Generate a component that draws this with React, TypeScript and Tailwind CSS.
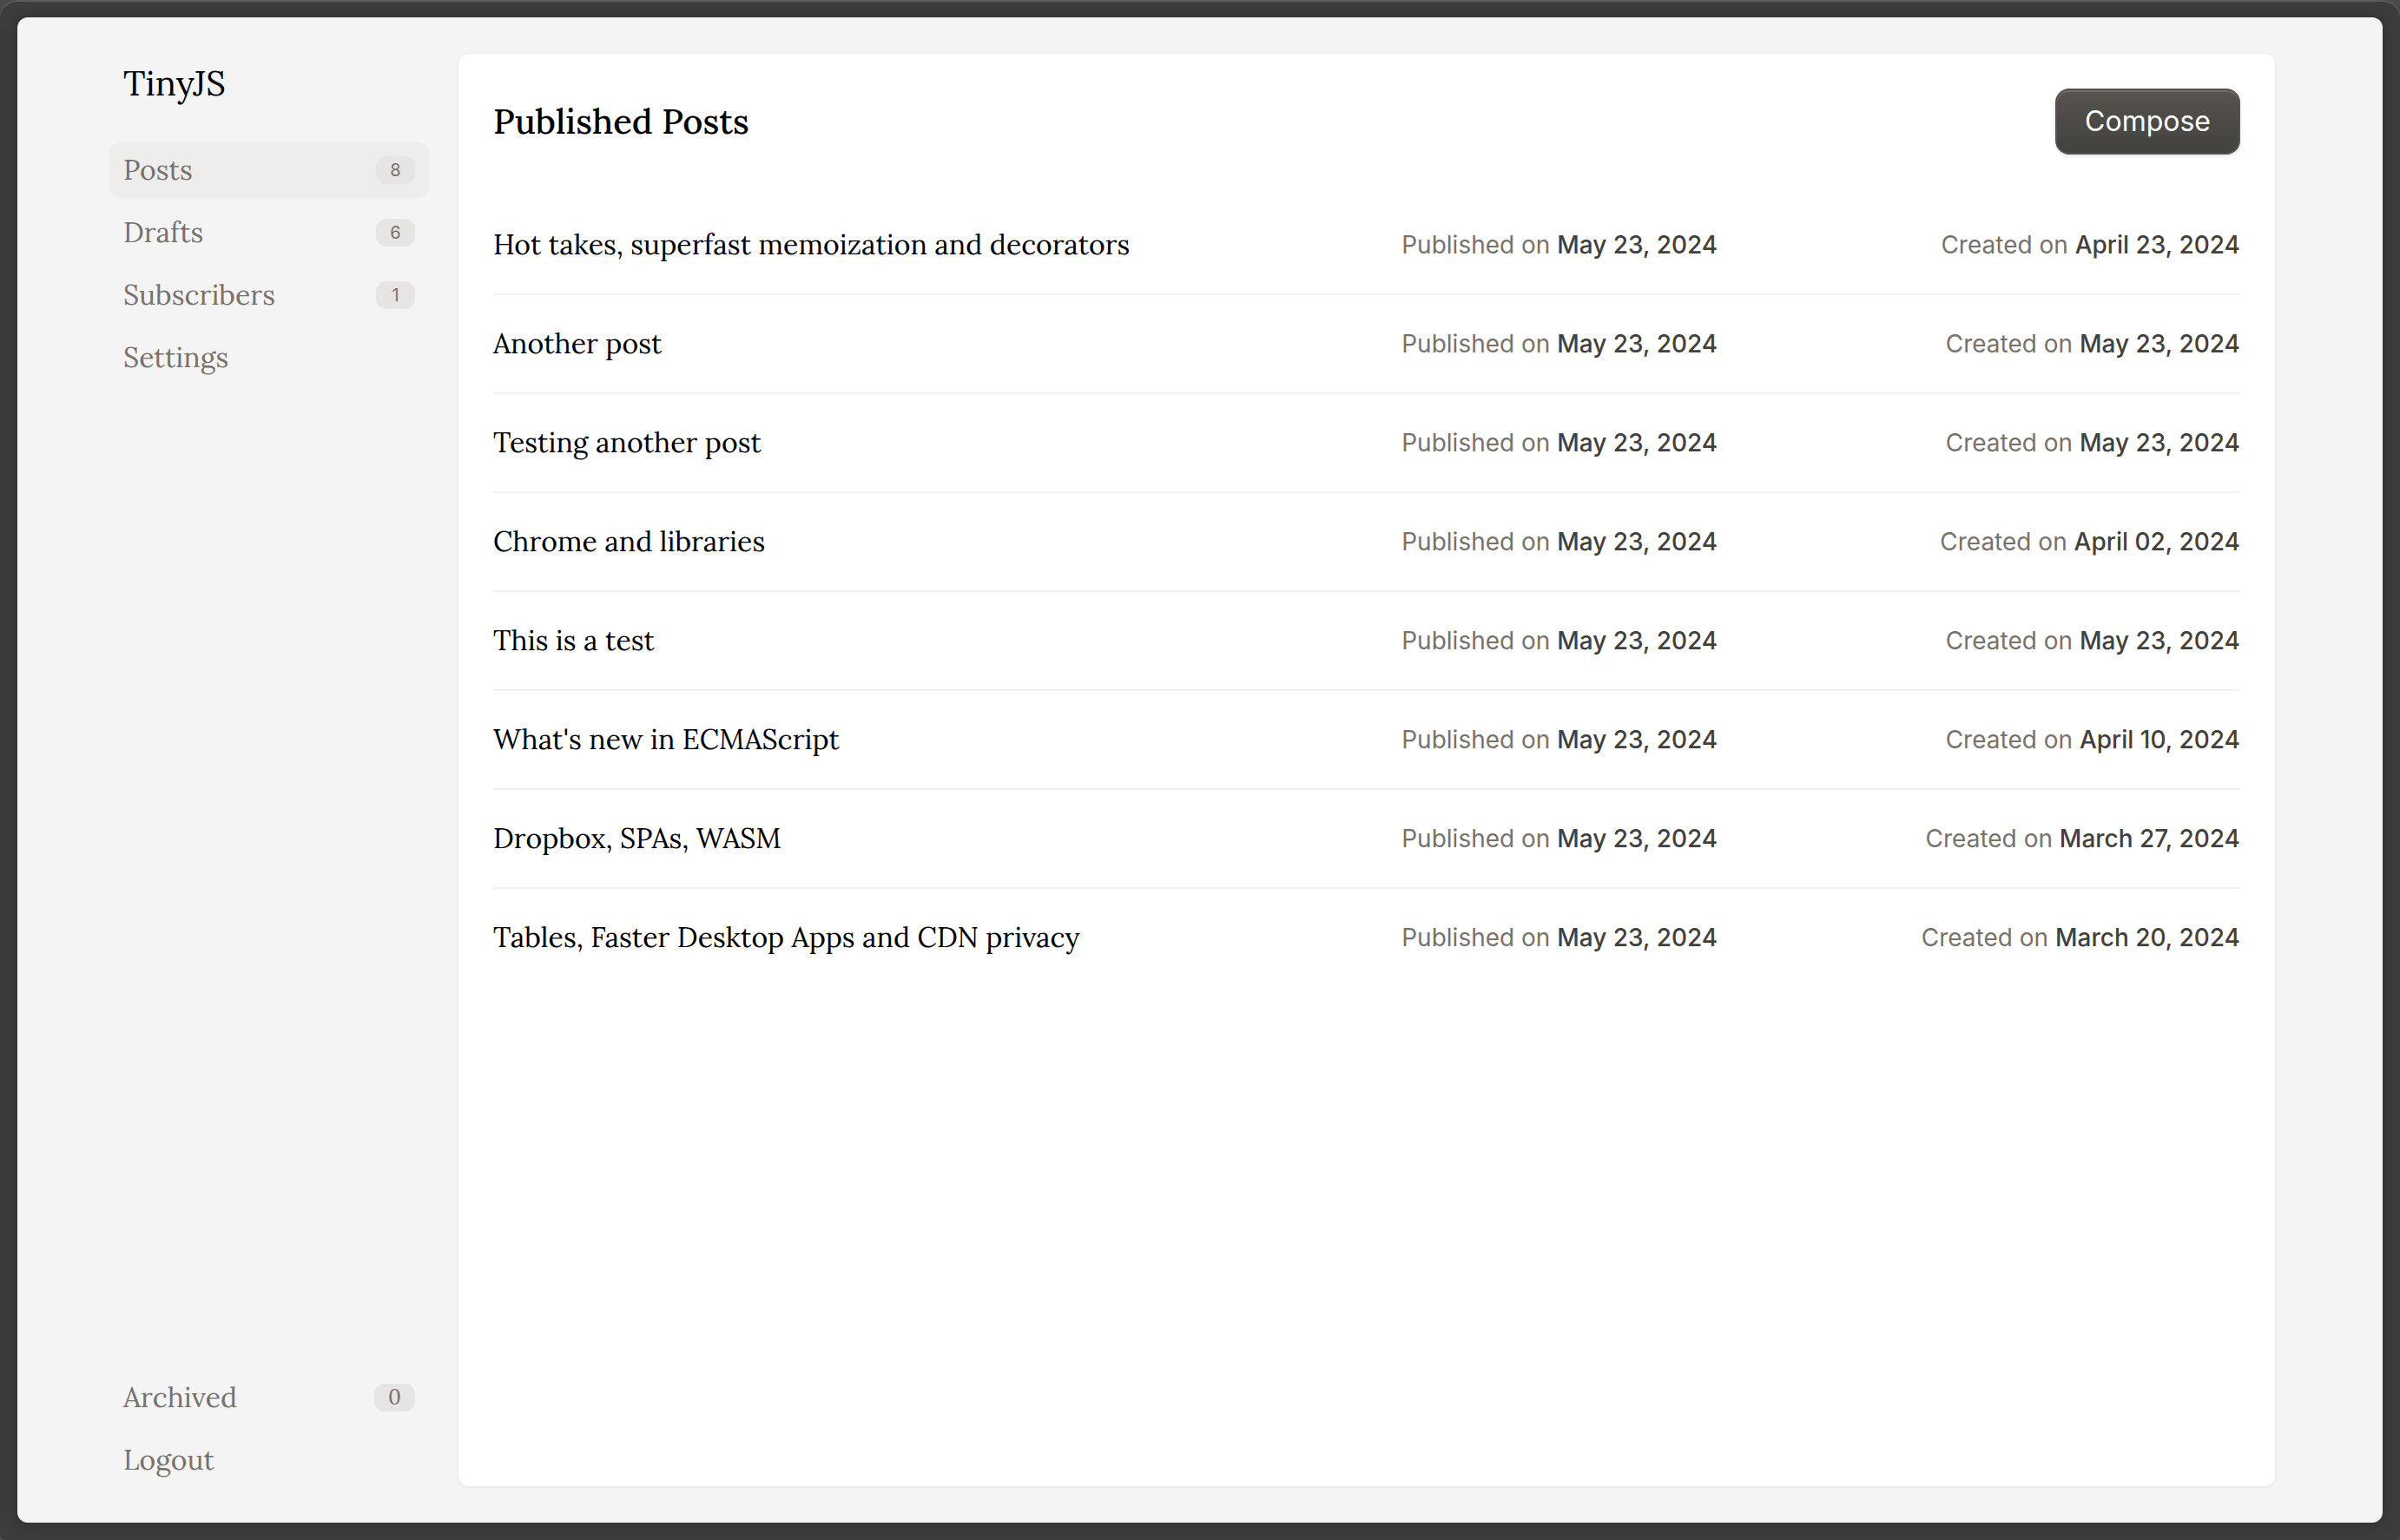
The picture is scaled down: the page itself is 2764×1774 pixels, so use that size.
import type { ReactNode } from "react";

const posts = [
  { title: "Hot takes, superfast memoization and decorators", published: "May 23, 2024", created: "April 23, 2024" },
  { title: "Another post", published: "May 23, 2024", created: "May 23, 2024" },
  { title: "Testing another post", published: "May 23, 2024", created: "May 23, 2024" },
  { title: "Chrome and libraries", published: "May 23, 2024", created: "April 02, 2024" },
  { title: "This is a test", published: "May 23, 2024", created: "May 23, 2024" },
  { title: "What's new in ECMAScript", published: "May 23, 2024", created: "April 10, 2024" },
  { title: "Dropbox, SPAs, WASM", published: "May 23, 2024", created: "March 27, 2024" },
  { title: "Tables, Faster Desktop Apps and CDN privacy", published: "May 23, 2024", created: "March 20, 2024" },
];

function NavItem({ label, active, children }: { label: string; active?: boolean; children?: ReactNode }) {
  return (
    <a
      href="#"
      aria-current={active ? "page" : undefined}
      className={
        "flex h-16 items-center justify-between rounded-xl px-4 text-[32px] leading-10 text-stone-500 " +
        (active ? "bg-[#eeedeb]" : "")
      }
    >
      <span>{label}</span>
      {children}
    </a>
  );
}

function Badge({ children }: { children: ReactNode }) {
  return (
    <span className="flex h-8 w-[45px] items-center justify-center rounded-xl bg-[#e7e5e4] font-['Inter',sans-serif] text-[20px] leading-8">
      {children}
    </span>
  );
}

export default function App() {
  return (
    <div className="min-h-screen bg-[#4a4a4a]">
      <div className="flex min-h-screen flex-col rounded-t-[20px] rounded-b-lg bg-[#3c3c3c] p-5 font-['Lora','Liberation_Serif',serif] shadow-[inset_0_2px_0_#5c5c5c]">
        <div className="flex grow gap-[34px] rounded-xl bg-[#f4f4f4] pt-[42px] pr-[124px] pb-10 pl-[106px] shadow-[0_0_14px_rgba(0,0,0,0.25)]">
          <aside className="flex w-[368px] shrink-0 flex-col">
            <h1 className="mb-[34px] px-4 text-[40px] leading-[68px] text-black">TinyJS</h1>
            <nav className="flex grow flex-col gap-2">
              <NavItem label="Posts" active>
                <Badge>8</Badge>
              </NavItem>
              <NavItem label="Drafts">
                <Badge>6</Badge>
              </NavItem>
              <NavItem label="Subscribers">
                <Badge>1</Badge>
              </NavItem>
              <NavItem label="Settings" />
              <div className="grow" />
              <NavItem label="Archived">
                <span className="flex h-8 w-[47px] items-center justify-center rounded-xl bg-[#e7e5e4] text-[24px] leading-8">0</span>
              </NavItem>
              <NavItem label="Logout" />
            </nav>
          </aside>
          <main className="mb-0.5 min-w-0 grow rounded-xl bg-white p-10 shadow-[0_0_0_2px_rgba(0,0,0,0.01),0_2px_4px_rgba(0,0,0,0.03)]">
            <header className="mb-12 flex items-center justify-between">
              <h2 className="text-[40px] leading-[56px] font-medium text-black">Published Posts</h2>
              <button
                type="button"
                className="h-[76px] rounded-2xl border-2 border-[#57534e] bg-linear-to-b from-[#57534e] to-[#44423d] px-8 font-['Inter',sans-serif] text-[32px] leading-10 text-white shadow-[inset_0_2px_0_rgba(255,255,255,0.15),0_2px_4px_rgba(0,0,0,0.1)]"
              >
                Compose
              </button>
            </header>
            <table className="w-full table-fixed border-separate border-spacing-0">
              <colgroup>
                <col className="w-[52%]" />
                <col className="w-[24%]" />
                <col className="w-[24%]" />
              </colgroup>
              <tbody>
                {posts.map((post) => (
                  <tr key={post.title} className="group h-[114px]">
                    <td className="border-b-2 border-[#f0f0f0] text-[32px] leading-10 text-black group-last:border-transparent">
                      <a href="#">{post.title}</a>
                    </td>
                    <td className="border-b-2 border-[#f0f0f0] font-['Inter',sans-serif] text-[28px] leading-10 whitespace-nowrap text-stone-500 group-last:border-transparent">
                      Published on <time className="font-medium text-stone-700">{post.published}</time>
                    </td>
                    <td className="border-b-2 border-[#f0f0f0] text-right font-['Inter',sans-serif] text-[28px] leading-10 whitespace-nowrap text-stone-500 group-last:border-transparent">
                      Created on <time className="font-medium text-stone-700">{post.created}</time>
                    </td>
                  </tr>
                ))}
              </tbody>
            </table>
          </main>
        </div>
      </div>
    </div>
  );
}
